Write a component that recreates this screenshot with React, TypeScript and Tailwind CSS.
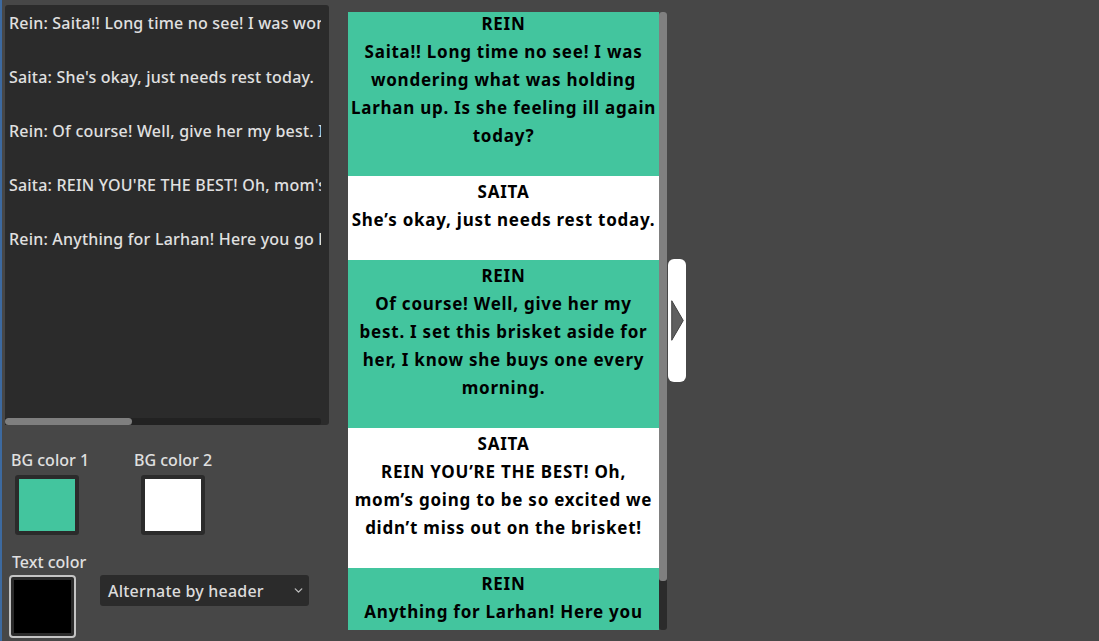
import { ChevronDown } from "lucide-react";

const lines = [
  "Rein: Saita!! Long time no see! I was wondering what was holding Larhan up. Is she feeling ill again today?",
  "Saita: She's okay, just needs rest today.",
  "Rein: Of course! Well, give her my best. I set this brisket aside for her, I know she buys one every morning.",
  "Saita: REIN YOU'RE THE BEST! Oh, mom's going to be so excited we didn't miss out on the brisket!",
  "Rein: Anything for Larhan! Here you go kiddo, tell her I said hi.",
];

const blocks = [
  {
    name: "REIN",
    bg: "bg-[#43c59e]",
    text: ["Saita!! Long time no see! I was", "wondering what was holding", "Larhan up. Is she feeling ill again", "today?"],
  },
  { name: "SAITA", bg: "bg-white", text: ["She’s okay, just needs rest today."] },
  {
    name: "REIN",
    bg: "bg-[#43c59e]",
    text: ["Of course! Well, give her my", "best. I set this brisket aside for", "her, I know she buys one every", "morning."],
  },
  {
    name: "SAITA",
    bg: "bg-white",
    text: ["REIN YOU’RE THE BEST! Oh,", "mom’s going to be so excited we", "didn’t miss out on the brisket!"],
  },
  { name: "REIN", bg: "bg-[#43c59e]", text: ["Anything for Larhan! Here you", "go kiddo, tell her I said hi."] },
];

const Swatch = ({ color }: { color: string }) => (
  <div className="h-[60px] w-[64px] rounded-[3px] bg-[#2b2b2b] p-[4px]">
    <div className={`h-full w-full ${color}`} />
  </div>
);

export default function App() {
  return (
    <div
      className="flex h-[641px] w-[1099px] overflow-hidden bg-[#474747] text-[#e0e0e0]"
      style={{ fontFamily: '"Noto Sans", "Open Sans", sans-serif' }}
    >
      <div className="w-[2px] shrink-0 bg-[#3d6aa0]" />

      {/* left column */}
      <div className="ml-[3px] flex w-[324px] shrink-0 flex-col pt-[5px]">
        <div className="relative h-[420px] rounded-[3px] bg-[#2b2b2b]">
          <div className="mr-[8px] flex flex-col gap-[32px] overflow-hidden pl-[4px] pt-[7px] text-[16px] font-medium leading-[22px] tracking-[0.2px]">
            {lines.map((l, i) => (
              <div key={i} className="whitespace-nowrap">
                {l}
              </div>
            ))}
          </div>
          <div className="absolute bottom-0 left-0 h-[7px] w-[316px] rounded-r-[3px] bg-[#222222]">
            <div className="h-full w-[127px] rounded-full bg-[#7f7f7f]" />
          </div>
        </div>

        <div className="mt-[24px] flex font-medium">
          <div className="flex w-[129px] flex-col pl-[6px]">
            <span className="text-[16px] leading-[22px]">BG color 1</span>
            <div className="ml-[4px] mt-[4px]">
              <Swatch color="bg-[#43c59e]" />
            </div>
          </div>
          <div className="flex flex-col">
            <span className="text-[16px] leading-[22px]">BG color 2</span>
            <div className="ml-[7px] mt-[4px]">
              <Swatch color="bg-white" />
            </div>
          </div>
        </div>

        <span className="ml-[7px] mt-[16px] text-[16px] font-medium leading-[22px]">Text color</span>
        <div className="mt-[2px] flex items-start">
          <div className="ml-[4px] h-[63px] w-[67px] rounded-[4px] border-2 border-[#c4c4c4] bg-[#2b2b2b] p-[3px]">
            <div className="h-full w-full bg-black" />
          </div>
          <div className="ml-[24px] flex h-[31px] w-[209px] items-center justify-between rounded-[3px] bg-[#2b2b2b] pl-[8px] pr-[4px] text-[16px] font-medium tracking-[0.2px] text-[#dcdcdc]">
            <span>Alternate by header</span>
            <ChevronDown className="h-[13px] w-[13px] text-[#bdbdbd]" strokeWidth={2.5} />
          </div>
        </div>
      </div>

      {/* preview column */}
      <div className="ml-[19px] mt-[12px] flex h-[618px] shrink-0">
        <div className="w-[311px] overflow-hidden" style={{ fontFamily: '"Noto Sans", sans-serif' }}>
          <div className="-mt-[4px]">
            {blocks.map((b, i) => (
              <div
                key={i}
                className={`${b.bg} pb-[26px] pt-[2px] text-center text-[17px] font-bold leading-[28px] tracking-[0.75px] text-black`}
              >
                <div>{b.name}</div>
                {b.text.map((t, j) => (
                  <div key={j} className="whitespace-nowrap">
                    {t}
                  </div>
                ))}
              </div>
            ))}
          </div>
        </div>
        <div className="flex w-[8px] flex-col rounded-[3px] bg-[#2b2b2b]">
          <div className="h-[569px] rounded-[3px] bg-[#808080]" />
        </div>
        <div className="ml-[1px] mt-[247px] flex h-[123px] w-[18px] items-center rounded-[6px] bg-white pl-[3px]">
          <svg width="13" height="41" viewBox="0 0 13 41">
            <path d="M0.75 0.75 L12.25 20.5 L0.75 40.25 Z" fill="#5f5f5f" stroke="#404040" strokeWidth="1" />
          </svg>
        </div>
      </div>
    </div>
  );
}
